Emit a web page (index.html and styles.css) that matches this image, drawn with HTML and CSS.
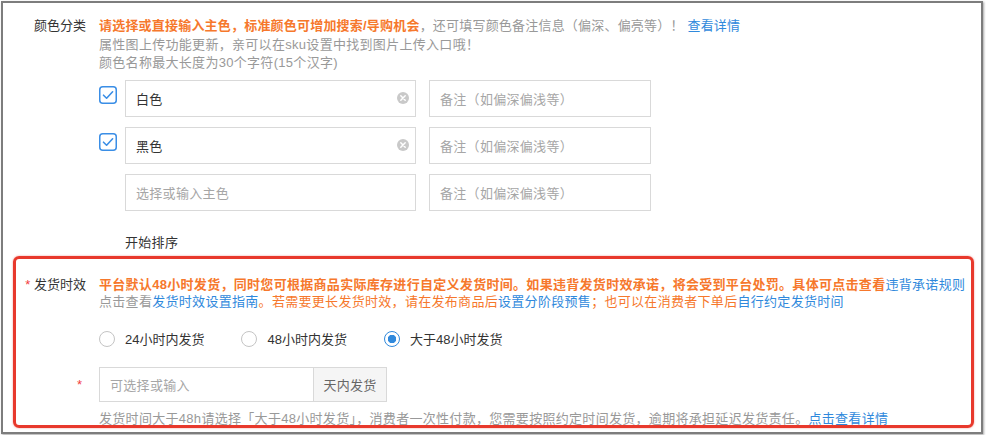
FILE: index.html
```html
<!DOCTYPE html>
<html lang="zh-CN">
<head>
<meta charset="utf-8">
<link rel="stylesheet" href="styles.css">
</head>
<body>
<div class="frame">
  <div class="field">
    <div class="label">颜色分类</div>
    <div class="content">
      <div class="help">
        <p class="line first"><strong class="orange">请选择或直接输入主色，标准颜色可增加搜索/导购机会</strong>，还可填写颜色备注信息（偏深、偏亮等）！ <a class="link">查看详情</a></p>
        <p class="line">属性图上传功能更新，亲可以在sku设置中找到图片上传入口哦！</p>
        <p class="line">颜色名称最大长度为30个字符(15个汉字)</p>
      </div>
      <div class="colors">
        <div class="color-row">
          <span class="check-slot">
            <svg class="checkbox" viewBox="0 0 18 18" width="18" height="18"><rect x="0.75" y="0.75" width="16.5" height="16.5" rx="3" fill="#fff" stroke="#3a8ee6" stroke-width="1.5"/><path d="M4.5 9.2 L7.6 12.2 L13.6 5.8" fill="none" stroke="#3a8ee6" stroke-width="1.6" stroke-linecap="round" stroke-linejoin="round"/></svg>
          </span>
          <div class="input main-input"><span class="value">白色</span><svg class="clear" viewBox="0 0 12 12" width="12" height="12"><circle cx="6" cy="6" r="6" fill="#c9c9c9"/><path d="M3.8 3.8 L8.2 8.2 M8.2 3.8 L3.8 8.2" stroke="#fff" stroke-width="1.5" stroke-linecap="round"/></svg></div>
          <div class="input note-input"><span class="placeholder">备注（如偏深偏浅等）</span></div>
        </div>
        <div class="color-row">
          <span class="check-slot">
            <svg class="checkbox" viewBox="0 0 18 18" width="18" height="18"><rect x="0.75" y="0.75" width="16.5" height="16.5" rx="3" fill="#fff" stroke="#3a8ee6" stroke-width="1.5"/><path d="M4.5 9.2 L7.6 12.2 L13.6 5.8" fill="none" stroke="#3a8ee6" stroke-width="1.6" stroke-linecap="round" stroke-linejoin="round"/></svg>
          </span>
          <div class="input main-input"><span class="value">黑色</span><svg class="clear" viewBox="0 0 12 12" width="12" height="12"><circle cx="6" cy="6" r="6" fill="#c9c9c9"/><path d="M3.8 3.8 L8.2 8.2 M8.2 3.8 L3.8 8.2" stroke="#fff" stroke-width="1.5" stroke-linecap="round"/></svg></div>
          <div class="input note-input"><span class="placeholder">备注（如偏深偏浅等）</span></div>
        </div>
        <div class="color-row">
          <span class="check-slot"></span>
          <div class="input main-input"><span class="placeholder">选择或输入主色</span></div>
          <div class="input note-input"><span class="placeholder">备注（如偏深偏浅等）</span></div>
        </div>
      </div>
      <div class="sort">开始排序</div>
    </div>
  </div>

  <section class="highlight">
    <div class="field ship">
      <div class="label"><span class="req">*</span> 发货时效</div>
      <div class="content">
        <p class="line2"><strong class="orange">平台默认48小时发货，同时您可根据商品实际库存进行自定义发货时间。如果违背发货时效承诺，将会受到平台处罚。具体可点击查看</strong><a class="link">违背承诺规则</a></p>
        <p class="line2 gray">点击查看<a class="link">发货时效设置指南</a><span class="orange">。若需要更长发货时效，请在发布商品后</span><a class="link">设置分阶段预售</a><span class="orange">；也可以在消费者下单后</span><a class="link">自行约定发货时间</a></p>
        <div class="radios">
          <label class="radio"><span class="circle"></span>24小时内发货</label>
          <label class="radio"><span class="circle"></span>48小时内发货</label>
          <label class="radio"><span class="circle checked"></span>大于48小时发货</label>
        </div>
      </div>
    </div>
    <div class="field ship days">
      <div class="label"><span class="req">*</span></div>
      <div class="content">
        <div class="input-group">
          <div class="input day-input"><span class="placeholder">可选择或输入</span></div>
          <div class="addon">天内发货</div>
        </div>
        <p class="tip">发货时间大于48h请选择「大于48小时发货」，消费者一次性付款，您需要按照约定时间发货，逾期将承担延迟发货责任。<a class="link">点击查看详情</a></p>
      </div>
    </div>
  </section>
</div>
</body>
</html>
```

FILE: styles.css
```css
* { box-sizing: border-box; }

html, body {
  margin: 0;
  padding: 0;
  background: #fff;
}

body {
  font-family: "Liberation Sans", "Noto Sans CJK SC", sans-serif;
  font-size: 13px;
  letter-spacing: 0.3px;
  color: #333;
}

p { margin: 0; }

.frame {
  margin: 1px;
  width: 982px;
  height: 433px;
  border: 2px solid #7d7d7d;
  box-shadow: 1px 1px 2px rgba(0, 0, 0, 0.35);
  padding-top: 14px;
  overflow: hidden;
  background: #fff;
}

.field {
  display: grid;
  grid-template-columns: 83px 1fr;
  column-gap: 13px;
}

.label {
  text-align: right;
  line-height: 18px;
  color: #333;
  white-space: nowrap;
  letter-spacing: 0;
}

.content { min-width: 0; }

.help { color: #999; }

.line {
  line-height: 18.5px;
  white-space: nowrap;
}

.line.first { letter-spacing: 0.2px; }

.orange { color: #f6782c; }
strong.orange { font-weight: 700; }

.link {
  color: #3089dc;
  text-decoration: none;
}

.colors {
  margin-top: 7px;
}

.color-row {
  display: flex;
  align-items: center;
  height: 37px;
  margin-bottom: 10px;
}
.color-row:last-child { margin-bottom: 0; }

.check-slot {
  width: 26px;
  flex: none;
  display: flex;
  align-items: center;
  height: 18px;
  margin-top: -6px;
}

.checkbox { display: block; }

.input {
  height: 37px;
  border: 1px solid #d9d9d9;
  background: #fff;
  display: flex;
  align-items: center;
  padding: 0 10px;
  white-space: nowrap;
}

.main-input {
  width: 291px;
  justify-content: space-between;
  padding-right: 6px;
}

.note-input {
  width: 222px;
  margin-left: 13px;
}

.value { color: #333; }
.placeholder { color: #a6a6a6; }

.clear { display: block; }

.sort {
  margin-top: 23px;
  margin-left: 26px;
  line-height: 18px;
  color: #333;
}

.highlight {
  margin: 4px 7px 0 10px;
  height: 172px;
  border: 3px solid #e8392c;
  border-radius: 6px;
  box-shadow: 0 0 2px rgba(232, 57, 44, 0.55);
  padding-top: 17px;
  overflow: hidden;
}

.ship {
  grid-template-columns: 70px 1fr;
}

.ship .label { line-height: 17px; }

.req {
  color: #f23c3c;
}

.line2 {
  line-height: 17px;
  white-space: nowrap;
}

.gray { color: #999; }

.radios {
  display: flex;
  align-items: center;
  height: 20px;
  margin-top: 19px;
  color: #333;
  letter-spacing: 0;
}

.radio {
  display: flex;
  align-items: center;
  margin-right: 37px;
  white-space: nowrap;
}

.circle {
  width: 16px;
  height: 16px;
  border: 1px solid #c4c4c4;
  border-radius: 50%;
  margin-right: 10px;
  background: #fff;
  flex: none;
}

.circle.checked {
  border-color: #3089dc;
  background: radial-gradient(circle, #3089dc 0 4px, #fff 4.5px);
}

.days {
  margin-top: 18px;
}

.days .label {
  line-height: 35px;
  padding-right: 4px;
}

.input-group {
  display: flex;
  height: 35px;
}

.day-input {
  width: 215px;
  height: 35px;
}

.addon {
  width: 73px;
  height: 35px;
  border: 1px solid #d9d9d9;
  border-left: none;
  background: #f5f5f5;
  color: #666;
  display: flex;
  align-items: center;
  justify-content: center;
}

.tip {
  margin-top: 8px;
  line-height: 18px;
  color: #999;
  white-space: nowrap;
}
```
